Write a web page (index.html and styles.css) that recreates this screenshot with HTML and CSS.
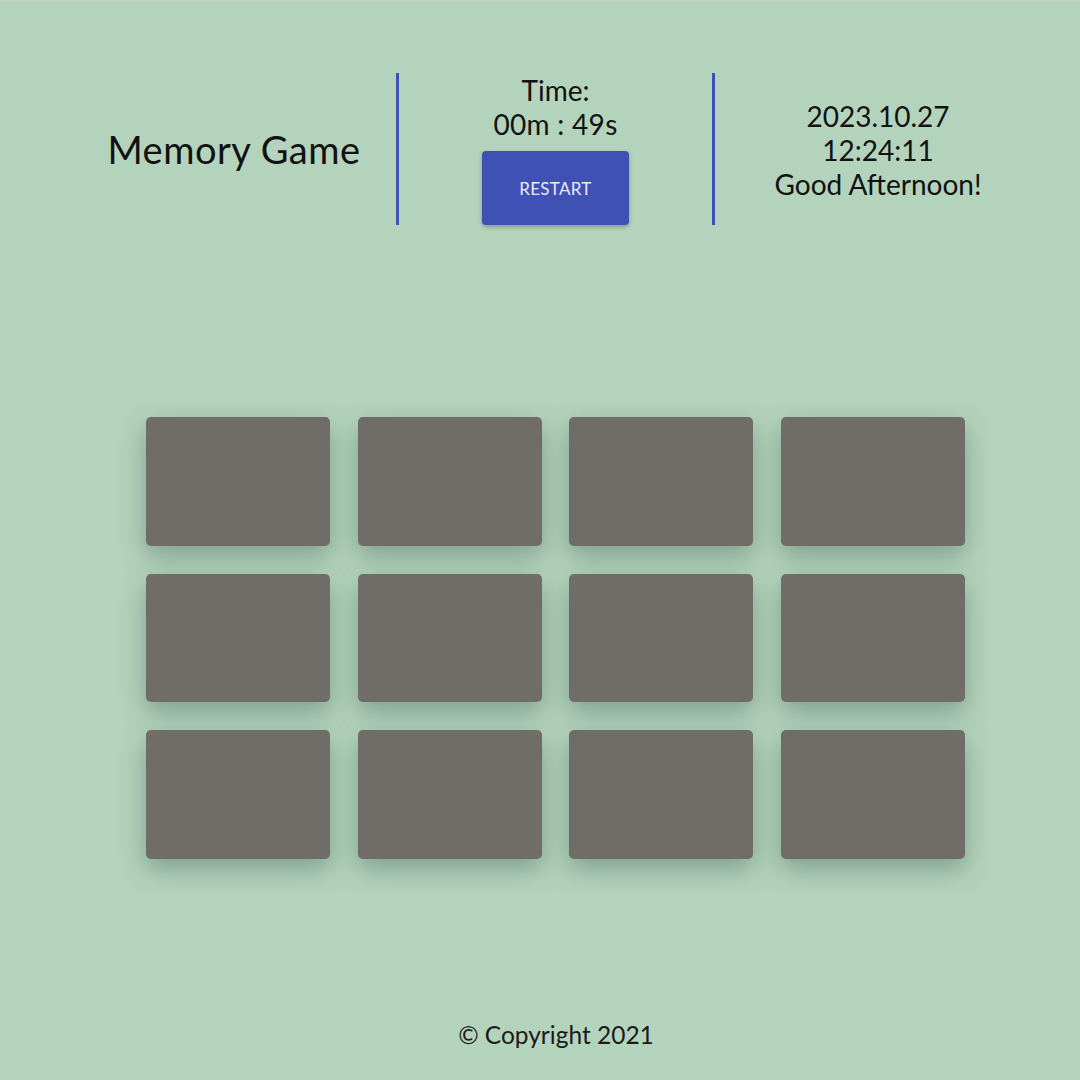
FILE: index.html
```html
<!DOCTYPE html>
<html lang="en">
<head>
<meta charset="utf-8">
<title>Memory Game</title>
<link rel="stylesheet" href="styles.css">
</head>
<body>
<div class="page">
  <header class="header">
    <div class="col col-title">
      <h1 class="title">Memory Game</h1>
    </div>
    <div class="col col-time">
      <div class="time-label">Time:</div>
      <div class="time-value">00m : 49s</div>
      <button class="restart">RESTART</button>
    </div>
    <div class="col col-clock">
      <div class="clock-line">2023.10.27</div>
      <div class="clock-line">12:24:11</div>
      <div class="clock-line">Good Afternoon!</div>
    </div>
  </header>
  <main class="board">
    <div class="card"></div>
    <div class="card"></div>
    <div class="card"></div>
    <div class="card"></div>
    <div class="card"></div>
    <div class="card"></div>
    <div class="card"></div>
    <div class="card"></div>
    <div class="card"></div>
    <div class="card"></div>
    <div class="card"></div>
    <div class="card"></div>
  </main>
  <footer class="footer">© Copyright 2021</footer>
</div>
</body>
</html>
```
FILE: styles.css
```css
html, body {
  margin: 0;
  padding: 0;
}
body {
  background: #b4d3bc;
  font-family: "Lato", "Noto Sans", sans-serif;
  color: #111;
  border-top: 1px solid #c7d3c9;
  box-sizing: border-box;
  min-height: 1080px;
}
.page {
  display: flex;
  flex-direction: column;
}
.header {
  display: grid;
  grid-template-columns: 324px 319px 326px;
  margin: 72px 0 0 72px;
  height: 152px;
}
.col {
  display: flex;
  flex-direction: column;
  align-items: center;
  justify-content: center;
  text-align: center;
}
.title {
  margin: 0;
  font-weight: 400;
  font-size: 38px;
  letter-spacing: 0.5px;
}
.col-time {
  border-left: 3px solid #3f51b5;
  border-right: 3px solid #3f51b5;
  justify-content: flex-start;
  font-size: 28px;
  line-height: 34px;
}
.time-value {
  letter-spacing: 0.3px;
}
.restart {
  margin-top: 10px;
  width: 147px;
  height: 74px;
  border: none;
  border-radius: 4px;
  background: #3f51b5;
  color: #eceaf8;
  font-family: "Lato", "Noto Sans", sans-serif;
  font-size: 17px;
  letter-spacing: 0.3px;
  box-shadow: 0 2px 4px rgba(0, 0, 0, 0.28);
}
.col-clock {
  font-size: 28px;
  line-height: 34px;
  padding-top: 2px;
}
.board {
  display: grid;
  grid-template-columns: repeat(4, 184px);
  grid-auto-rows: 128.7px;
  column-gap: 27.7px;
  row-gap: 28px;
  margin: 192px 0 0 146px;
}
.card {
  background: #706c67;
  border-radius: 5px;
  box-shadow: 0 10px 26px rgba(30, 70, 60, 0.36);
}
.footer {
  margin-top: 160px;
  text-align: center;
  padding-left: 32px;
  font-size: 24.5px;
  line-height: 32px;
  color: #1a1a1a;
}
```
